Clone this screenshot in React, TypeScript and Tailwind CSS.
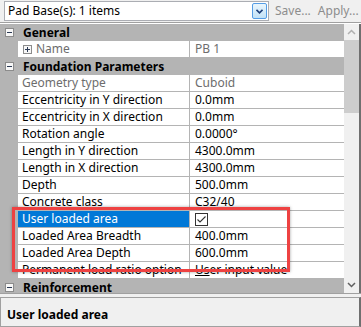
import React from "react";

type Row =
  | { kind: "cat"; label: string }
  | { kind: "prop"; label: string; value?: string; readOnly?: boolean; sub?: boolean; selected?: boolean; check?: boolean };

const rows: Row[] = [
  { kind: "cat", label: "General" },
  { kind: "prop", label: "Name", value: "PB 1", readOnly: true, sub: true },
  { kind: "cat", label: "Foundation Parameters" },
  { kind: "prop", label: "Geometry type", value: "Cuboid", readOnly: true },
  { kind: "prop", label: "Eccentricity in Y direction", value: "0.0mm" },
  { kind: "prop", label: "Eccentricity in X direction", value: "0.0mm" },
  { kind: "prop", label: "Rotation angle", value: "0.0000°" },
  { kind: "prop", label: "Length in Y direction", value: "4300.0mm" },
  { kind: "prop", label: "Length in X direction", value: "4300.0mm" },
  { kind: "prop", label: "Depth", value: "500.0mm" },
  { kind: "prop", label: "Concrete class", value: "C32/40" },
  { kind: "prop", label: "User loaded area", selected: true, check: true },
  { kind: "prop", label: "Loaded Area Breadth", value: "400.0mm" },
  { kind: "prop", label: "Loaded Area Depth", value: "600.0mm" },
  { kind: "prop", label: "Permanent load ratio option", value: "User input value" },
  { kind: "cat", label: "Reinforcement" },
];

function ExpandBox({ plus }: { plus?: boolean }) {
  return (
    <svg width="9" height="9" viewBox="0 0 9 9" className="shrink-0">
      <rect x="0.5" y="0.5" width="8" height="8" fill="#f7f7f7" stroke="#8c8c8c" />
      <path d="M2 4.5h5" stroke="#2b3a55" strokeWidth="1" />
      {plus && <path d="M4.5 2v5" stroke="#2b3a55" strokeWidth="1" />}
    </svg>
  );
}

export default function App() {
  return (
    <div
      className="w-[361px] h-[327px] bg-[#f0f0f0] flex flex-col overflow-hidden text-[12px] text-black"
      style={{ fontFamily: '"Segoe UI", "Noto Sans", Tahoma, sans-serif' }}
    >
      {/* Toolbar */}
      <div className="h-[22px] flex items-center pl-[4px] shrink-0">
        <div className="w-[265px] h-[20px] bg-white border border-[#abadb3] flex items-center">
          <span className="flex-1 pl-[3px] leading-none">Pad Base(s): 1 items</span>
          <div className="w-[15px] h-[16px] mr-[1px] rounded-[2px] border border-[#569de5] bg-gradient-to-b from-[#eaf6fd] to-[#c2e1f7] flex items-center justify-center">
            <svg width="7" height="5" viewBox="0 0 7 5">
              <path d="M0.5 0.8 3.5 3.8 6.5 0.8" stroke="#1e3f7a" strokeWidth="1.6" fill="none" />
            </svg>
          </div>
        </div>
        <span className="ml-[6px] text-[#8d8d8d]">Save...</span>
        <span className="ml-[7px] text-[#8d8d8d]">Apply...</span>
      </div>

      {/* Property grid */}
      <div className="h-[272px] shrink-0 border-t border-b border-[#a0a0a0] flex pt-[1px] bg-white">
        <div className="flex-1 flex flex-col overflow-hidden">
          {rows.map((r, i) =>
            r.kind === "cat" ? (
              <div key={i} className="h-[17px] shrink-0 bg-[#b4b4b4] flex items-center">
                <div className="w-[18px] flex justify-center pl-[1px]">
                  <ExpandBox />
                </div>
                <span className="pl-[5px] font-bold leading-none">{r.label}</span>
              </div>
            ) : (
              <div key={i} className="h-[17px] shrink-0 flex">
                <div className="w-[18px] bg-[#b4b4b4] shrink-0" />
                <div
                  className={`w-[172px] shrink-0 flex items-center border-b border-r border-[#b4b4b4] ${
                    r.selected ? "bg-[#0078d7] text-white" : ""
                  } ${r.readOnly ? "text-[#6d6d6d]" : ""}`}
                >
                  {r.sub ? (
                    <>
                      <span className="pl-[5px] flex items-center">
                        <ExpandBox plus />
                      </span>
                      <span className="pl-[4px] leading-none">{r.label}</span>
                    </>
                  ) : (
                    <span className="pl-[4px] leading-none whitespace-nowrap">{r.label}</span>
                  )}
                </div>
                <div
                  className={`flex-1 flex items-center pl-[5px] border-b border-[#b4b4b4] whitespace-nowrap ${
                    r.readOnly ? "text-[#6d6d6d]" : ""
                  }`}
                >
                  {r.check ? (
                    <svg width="13" height="13" viewBox="0 0 13 13">
                      <rect x="0.5" y="0.5" width="12" height="12" fill="white" stroke="#333" />
                      <path d="M2.5 6.5 5 9 10.5 3.5" stroke="#333" strokeWidth="1.1" fill="none" />
                    </svg>
                  ) : r.value === "User input value" ? (
                    <span className="leading-none">
                      <span className="underline">Us</span>er input value
                    </span>
                  ) : (
                    <span className="leading-none">{r.value}</span>
                  )}
                </div>
              </div>
            )
          )}
        </div>
        {/* Scrollbar */}
        <div className="w-[15px] shrink-0 bg-[#f0f0f0] flex flex-col">
          <div className="h-[16px] flex items-center justify-center">
            <svg width="9" height="6" viewBox="0 0 9 6">
              <path d="M1 5 4.5 1.5 8 5" stroke="#b0b0b0" strokeWidth="1.5" fill="none" />
            </svg>
          </div>
          <div className="mx-0 h-[73px] bg-[#cdcdcd]" />
          <div className="flex-1" />
          <div className="h-[16px] flex items-center justify-center">
            <svg width="9" height="6" viewBox="0 0 9 6">
              <path d="M1 1 4.5 4.5 8 1" stroke="#606060" strokeWidth="1.5" fill="none" />
            </svg>
          </div>
        </div>
        <div className="w-[2px] shrink-0 bg-[#6f6f6f]" />
      </div>

      <div className="h-[3px] shrink-0" />

      {/* Description panel */}
      <div className="flex-1 border border-[#a0a0a0] border-r-2 border-r-[#6f6f6f] bg-[#f0f0f0] pl-[6px] pt-[8px]">
        <span className="font-bold">User loaded area</span>
      </div>

      {/* Highlight annotation */}
      <div className="absolute left-[12px] top-[207px] w-[278px] h-[65px] border-[3px] border-[#ee4242] shadow-[0_0_3px_rgba(0,0,0,0.35)] pointer-events-none" />
    </div>
  );
}
